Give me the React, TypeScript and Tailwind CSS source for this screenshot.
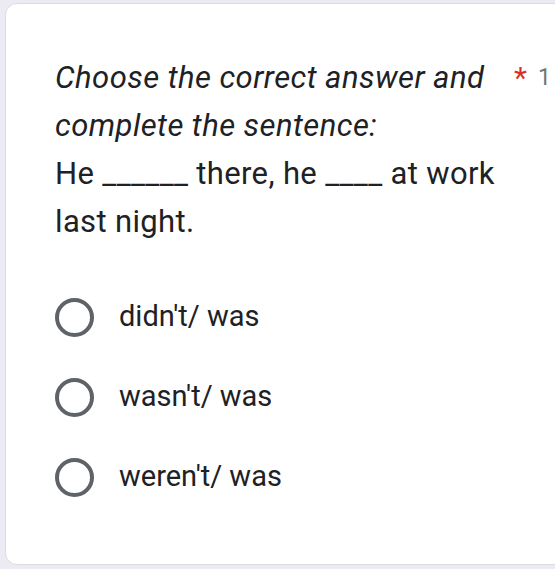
const options = ["didn't/ was", "wasn't/ was", "weren't/ was"];

export default function App() {
  return (
    <div
      className="h-[569px] w-[555px] overflow-hidden bg-[#ecebf4] pt-[3px] pl-[5px]"
      style={{ fontFamily: "Roboto, 'Liberation Sans', sans-serif" }}
    >
      <div className="h-[562px] w-[640px] rounded-[12px] border border-[#dadce0] bg-white pt-[50px] pl-[49px]">
        <div className="flex items-start">
          <div className="w-[460px] shrink-0 text-[31px] leading-[48px] tracking-[0.35px] text-[#202124]">
            <div className="italic tracking-[0.45px]">
              Choose the correct answer and complete the sentence:
            </div>
            <div>He ______ there, he ____ at work last night.</div>
          </div>
          <span className="-ml-[1px] text-[30px] leading-[48px] text-[#d93025]">*</span>
          <span className="ml-[11px] whitespace-nowrap text-[23px] leading-[48px] text-[#70757a]">
            1 point
          </span>
        </div>

        <div className="mt-[51px] flex flex-col gap-[40px]">
          {options.map((o) => (
            <div key={o} className="flex h-[40px] items-center">
              <div className="h-[39px] w-[39px] rounded-full border-[4px] border-[#5f6368]" />
              <span className="ml-[25px] text-[29px] text-[#202124]">{o}</span>
            </div>
          ))}
        </div>
      </div>
    </div>
  );
}
